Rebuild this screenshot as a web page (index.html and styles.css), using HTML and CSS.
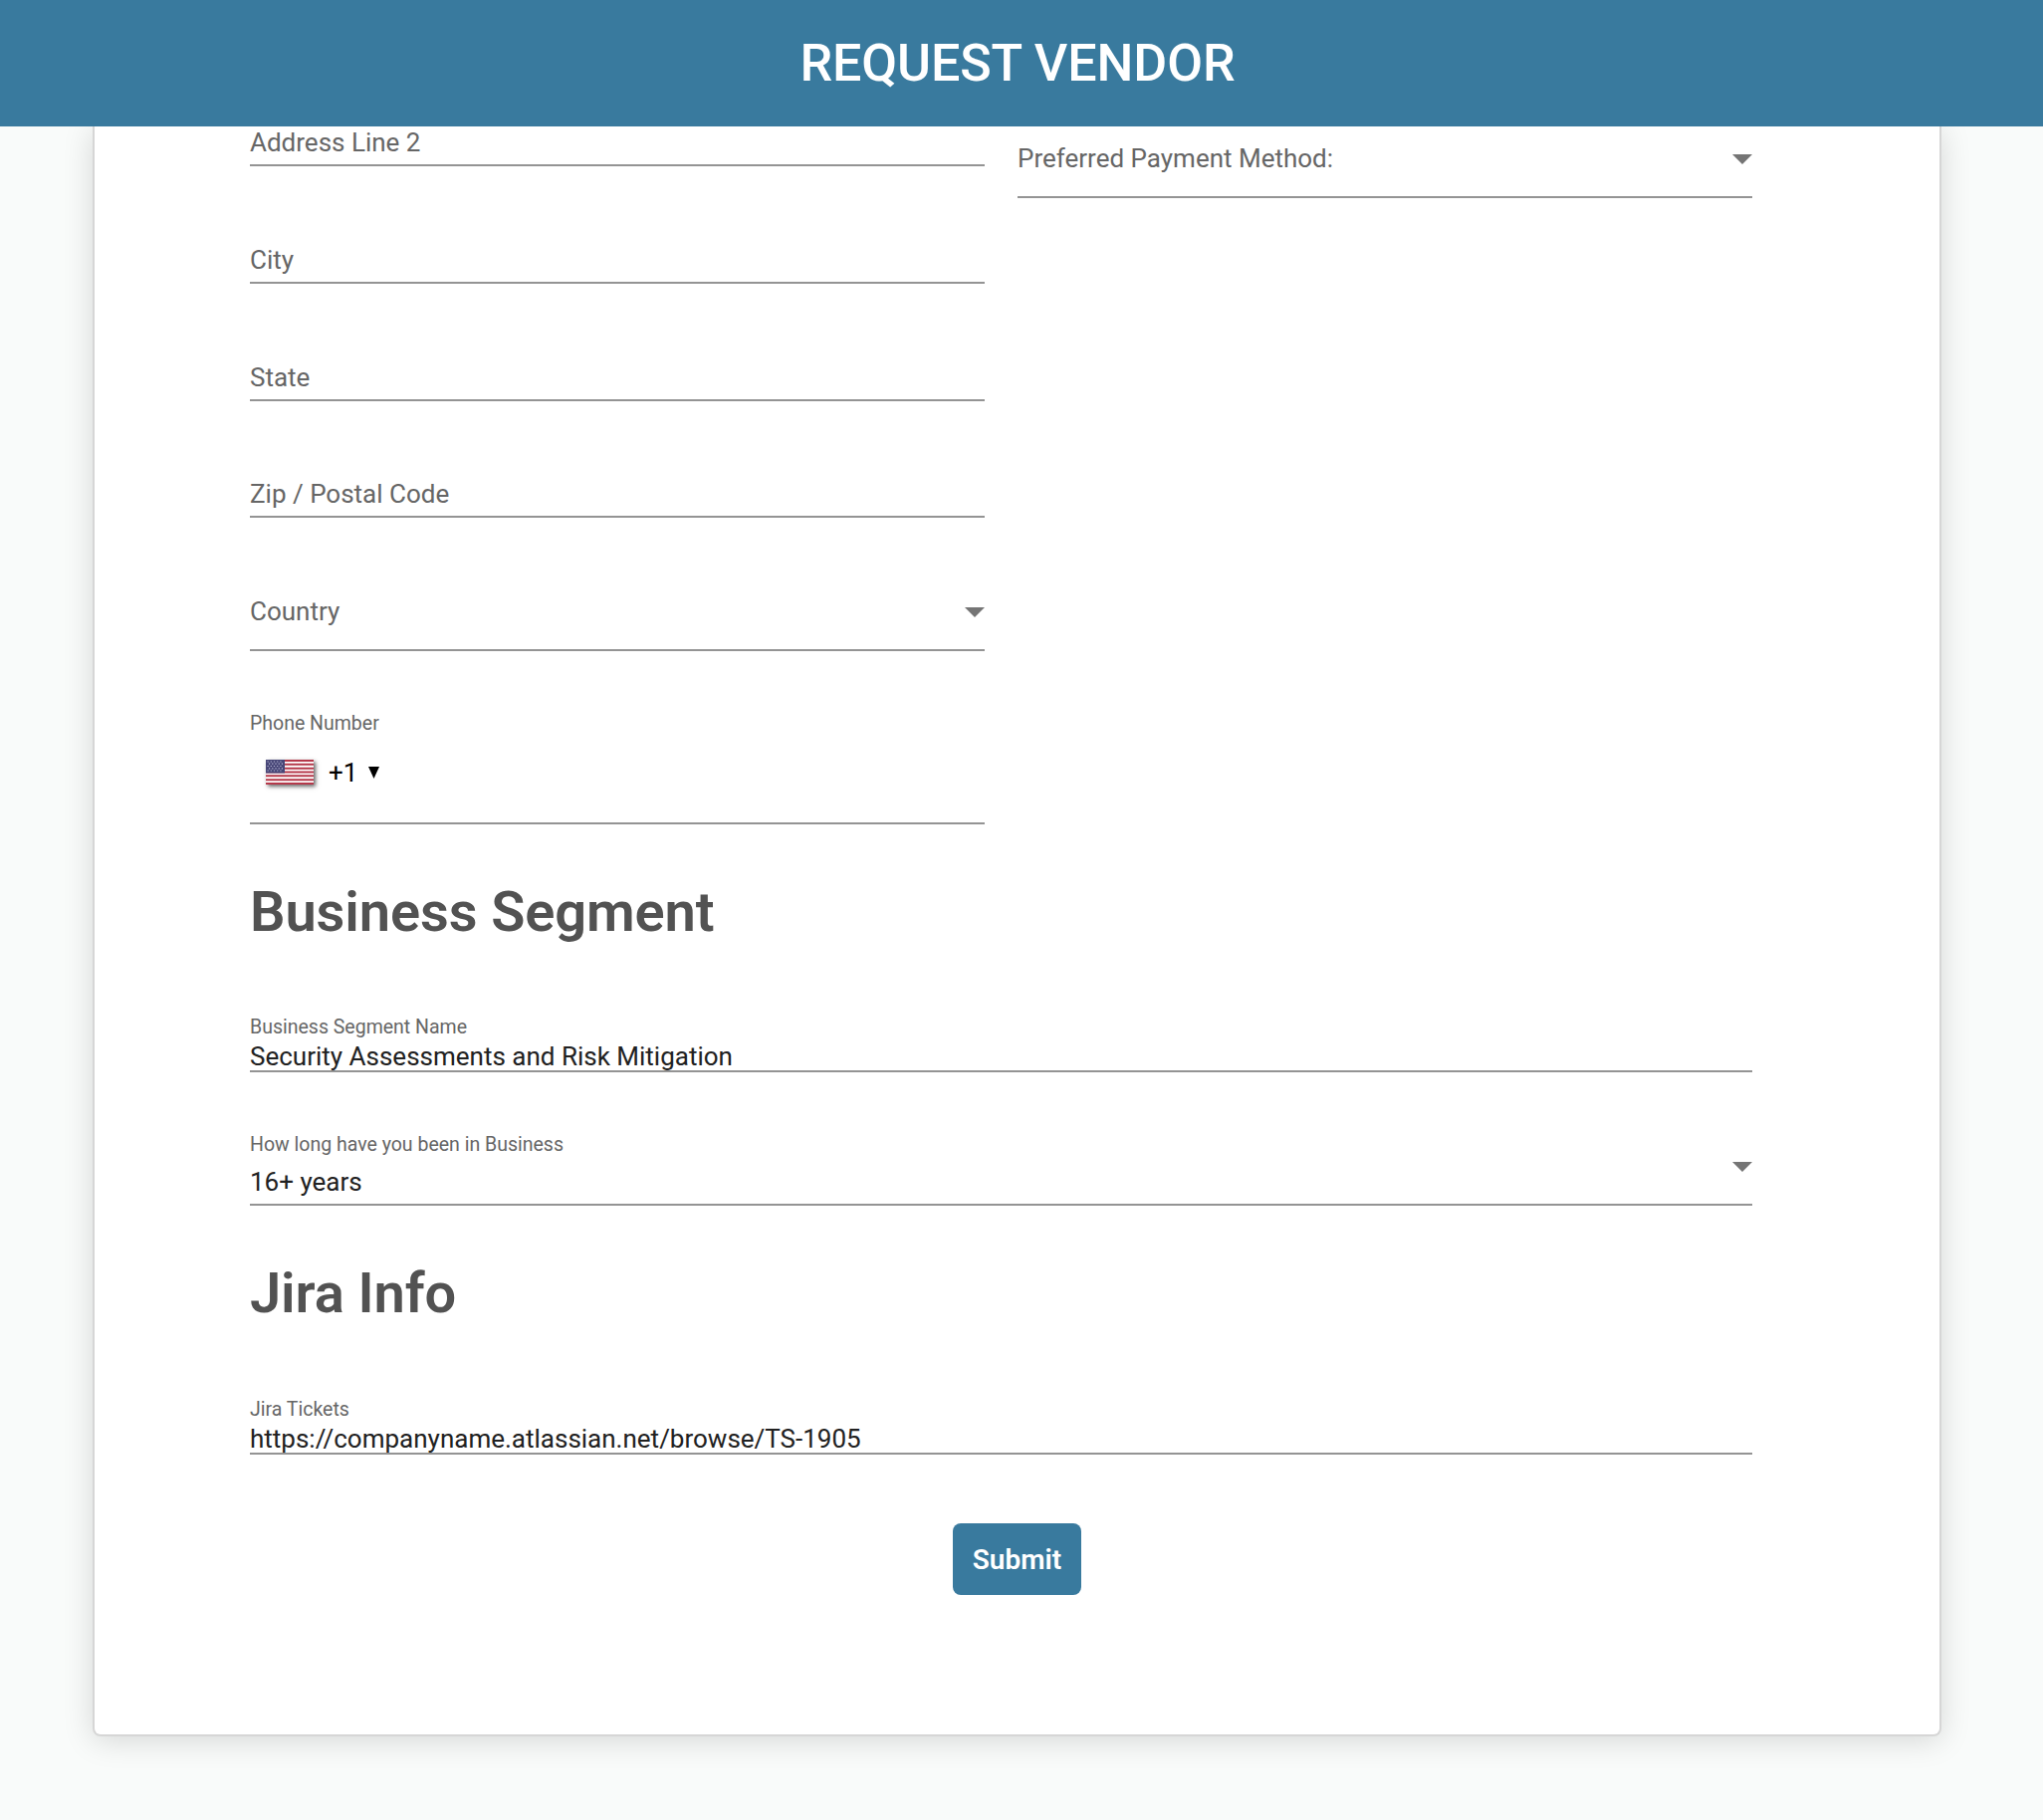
FILE: index.html
```html
<!DOCTYPE html>
<html lang="en">

<head>
    <meta charset="UTF-8" />
    <meta name="viewport" content="width=device-width, initial-scale=1.0" />
    <title>Request Vendor</title>
    <link rel="stylesheet" href="styles.css">
</head>

<body>
    <header class="header">
        <h1>REQUEST VENDOR</h1>
    </header>

    <main class="card">
        <form class="vendor-form">
            <div class="columns">
                <div class="column">
                    <div class="field first">
                        <input type="text" placeholder="Address Line 2" />
                    </div>
                    <div class="field">
                        <input type="text" placeholder="City" />
                    </div>
                    <div class="field">
                        <input type="text" placeholder="State" />
                    </div>
                    <div class="field zip">
                        <input type="text" placeholder="Zip / Postal Code" />
                    </div>
                    <div class="field select country">
                        <span class="placeholder">Country</span>
                        <span class="arrow"></span>
                    </div>
                    <div class="field phone">
                        <label>Phone Number</label>
                        <div class="phone-row">
                            <svg class="flag" viewBox="0 0 48 25" width="48" height="25" preserveAspectRatio="none">
                                <rect width="48" height="25" fill="#fff" />
                                <path d="M0 1h48M0 4.800h48M0 8.700h48M0 12.500h48M0 16.300h48M0 20.200h48M0 24h48" stroke="#b5384a" stroke-width="2" />
                                <rect width="19" height="13.500" fill="#484778" />
                                <path d="M1.500 2h16M1.500 6.500h16M1.500 11h16" stroke="#b9b9d4" stroke-width="1.2" stroke-dasharray="1.2 2" />
                                <path d="M3 4.200h14M3 8.800h14" stroke="#b9b9d4" stroke-width="1.2" stroke-dasharray="1.2 2" />
                            </svg>
                            <span class="dial-code">+1</span>
                            <svg class="caret" viewBox="0 0 11 12" width="11" height="12">
                                <path d="M0 0h11L5.500 12z" />
                            </svg>
                        </div>
                    </div>
                </div>

                <div class="column">
                    <div class="field select payment">
                        <span class="placeholder">Preferred Payment Method:</span>
                        <span class="arrow"></span>
                    </div>
                </div>
            </div>

            <h2>Business Segment</h2>
            <div class="field filled segment">
                <label for="segmentName">Business Segment Name</label>
                <input type="text" id="segmentName" value="Security Assessments and Risk Mitigation" />
            </div>
            <div class="field filled years">
                <label>How long have you been in Business</label>
                <div class="select-value">
                    <span>16+ years</span>
                    <span class="arrow"></span>
                </div>
            </div>

            <h2>Jira Info</h2>
            <div class="field filled tickets">
                <label for="jiraTickets">Jira Tickets</label>
                <input type="text" id="jiraTickets" value="https://companyname.atlassian.net/browse/TS-1905" />
            </div>
        </form>

        <button class="btn-submit" type="submit">Submit</button>
    </main>
</body>

</html>
```

FILE: styles.css
```css
* {
    margin: 0;
    padding: 0;
    box-sizing: border-box;
}

body {
    font-family: Roboto, "Helvetica Neue", sans-serif;
    font-size: 26px;
    background: #f9fbfa;
    min-height: 100vh;
    padding-top: 127px;
    overflow: hidden;
}

.header {
    position: fixed;
    top: 0;
    left: 0;
    width: 100%;
    height: 127px;
    padding: 1px 8px 0 0;
    display: flex;
    align-items: center;
    justify-content: center;
    background: #397a9e;
    color: #fff;
    z-index: 10;
}

.header h1 {
    font-size: 52px;
    font-weight: 500;
    line-height: 62px;
    letter-spacing: -0.1px;
}

.card {
    width: 1857px;
    height: 1617px;
    margin-left: 93px;
    background: #fff;
    border: 2px solid #d6d6d6;
    border-top: none;
    border-radius: 0 0 8px 8px;
    box-shadow: 0 4px 30px rgba(0, 0, 0, 0.15);
}

.vendor-form {
    margin: 0 188px 0 156px;
}

.columns {
    display: grid;
    grid-template-columns: 1fr 1fr;
    gap: 33px;
}

.field {
    height: 118px;
    display: flex;
    flex-direction: column;
    justify-content: flex-end;
    padding-bottom: 7px;
    border-bottom: 2px solid #949494;
}

.field.first {
    height: 40px;
}

.field.zip {
    height: 117px;
}

.field input {
    width: 100%;
    height: 30px;
    border: none;
    outline: none;
    background: transparent;
    font-family: inherit;
    font-size: 26px;
    color: #212121;
}

.field input::placeholder,
.placeholder {
    color: #666;
    opacity: 1;
}

.field label {
    font-size: 19.5px;
    line-height: 24px;
    color: #666;
}

.field.select {
    flex-direction: row;
    align-items: flex-end;
    justify-content: space-between;
    padding-bottom: 23px;
    line-height: 30px;
}

.field.country {
    height: 134px;
}

.field.payment {
    height: 72px;
}

.arrow {
    border-left: 10px solid transparent;
    border-right: 10px solid transparent;
    border-top: 10px solid #757575;
    margin-bottom: 9px;
}

.field.phone {
    height: 174px;
    padding-bottom: 27px;
}

.phone-row {
    display: flex;
    align-items: center;
    margin-top: 14px;
    padding-left: 16px;
    height: 46px;
    color: #000;
}

.flag {
    margin-bottom: 1px;
    box-shadow: 2px 2px 4px rgba(0, 0, 0, 0.6);
}

.dial-code {
    margin-left: 15px;
}

.caret {
    margin: 0 0 1px 11px;
}

h2 {
    margin-top: 58px;
    font-size: 56px;
    font-weight: 600;
    line-height: 60px;
    letter-spacing: -0.1px;
    color: #525252;
}

.field.filled {
    padding-bottom: 0;
    line-height: 28px;
    color: #212121;
}

.field.filled input {
    height: 28px;
    margin-top: 3px;
}

.field.segment {
    height: 131px;
}

.field.filled.years {
    height: 134px;
    padding-bottom: 8px;
}

.field.tickets {
    height: 132px;
}

.select-value {
    display: flex;
    align-items: flex-end;
    justify-content: space-between;
    margin-top: 5px;
}

.select-value .arrow {
    margin-bottom: 24px;
}

.btn-submit {
    display: block;
    width: 129px;
    height: 72px;
    margin: 69px auto 0;
    border: none;
    border-radius: 8px;
    background: #397a9e;
    color: #fff;
    font-family: inherit;
    font-size: 28px;
    font-weight: 600;
    cursor: pointer;
}
```
